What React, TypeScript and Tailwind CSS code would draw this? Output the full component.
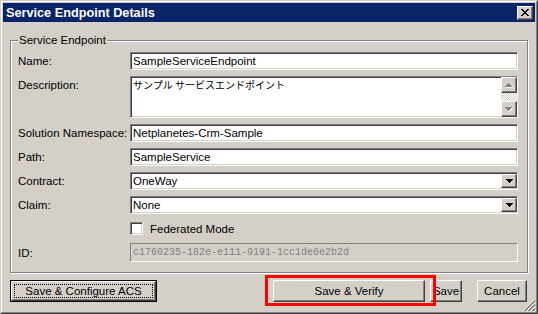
import React from "react";

const sunken =
  "border border-t-[#808080] border-l-[#808080] border-b-white border-r-white shadow-[inset_1px_1px_0_#404040,inset_-1px_-1px_0_#d4d0c8]";
const raised =
  "border border-t-white border-l-white border-b-[#404040] border-r-[#404040] shadow-[inset_-1px_-1px_0_#808080]";

function DownArrow({ color = "#000" }: { color?: string }) {
  return (
    <svg width="7" height="4" viewBox="0 0 7 4" className="block">
      <path d="M0 0h7v1H0zM1 1h5v1H1zM2 2h3v1H2zM3 3h1v1H3z" fill={color} />
    </svg>
  );
}

function UpArrowDisabled() {
  return (
    <svg width="8" height="5" viewBox="0 0 8 5" className="block">
      <path d="M4 1h1v1H4zM3 2h3v1H3zM2 3h5v1H2zM1 4h7v1H1z" fill="#fff" />
      <path d="M3 0h1v1H3zM2 1h3v1H2zM1 2h5v1H1zM0 3h7v1H0z" fill="#808080" />
    </svg>
  );
}

function DownArrowDisabled() {
  return (
    <svg width="8" height="5" viewBox="0 0 8 5" className="block">
      <path d="M1 1h7v1H1zM2 2h5v1H2zM3 3h3v1H3zM4 4h1v1H4z" fill="#fff" />
      <path d="M0 0h7v1H0zM1 1h5v1H1zM2 2h3v1H2zM3 3h1v1H3z" fill="#808080" />
    </svg>
  );
}

function ResizeGrip() {
  const px: React.ReactNode[] = [];
  const white = [11, 15, 19];
  const gray = [12, 13, 16, 17, 20, 21];
  for (let y = 0; y < 12; y++) {
    for (let x = 0; x < 12; x++) {
      const k = x + y;
      if (white.includes(k)) px.push(<rect key={`${x}-${y}`} x={x} y={y} width="1" height="1" fill="#fff" />);
      else if (gray.includes(k)) px.push(<rect key={`${x}-${y}`} x={x} y={y} width="1" height="1" fill="#808080" />);
    }
  }
  return (
    <svg width="12" height="12" viewBox="0 0 12 12" shapeRendering="crispEdges" className="absolute bottom-[3px] right-[3px]">
      {px}
    </svg>
  );
}

function TextRow({ label, value }: { label: string; value: string }) {
  return (
    <div className="flex h-[18px] items-center">
      <div className="w-[112px] shrink-0">{label}</div>
      <div className={`${sunken} flex h-full flex-1 items-center bg-white pl-[2px]`}>
        {value}
      </div>
    </div>
  );
}

function ComboRow({ label, value }: { label: string; value: string }) {
  return (
    <div className="flex h-[18px] items-center">
      <div className="w-[112px] shrink-0">{label}</div>
      <div className={`${sunken} flex h-full flex-1 items-center bg-white pl-[2px]`}>
        <span className="flex-1">{value}</span>
        <div
          className={`${raised} flex h-[14px] w-[16px] items-center justify-center bg-[#d4d0c8]`}
        >
          <DownArrow />
        </div>
      </div>
    </div>
  );
}

export default function App() {
  return (
    <div className="relative h-[314px] w-[538px] select-none font-['Liberation_Sans',Arial,sans-serif] text-[11.5px] leading-[14px] text-black">
      <div className="h-full w-full border border-t-[#d4d0c8] border-l-[#d4d0c8] border-b-[#404040] border-r-[#404040] bg-[#d4d0c8]">
        <div className="flex h-full w-full flex-col border border-t-white border-l-white border-b-[#808080] border-r-[#808080] p-[1px]">
          {/* Title bar */}
          <div className="flex h-[19px] shrink-0 items-center justify-between bg-[#0a246a] pl-[3px] pr-[2px]">
            <span className="text-[12.7px] font-bold text-white">Service Endpoint Details</span>
            <div
              className={`${raised} flex h-[14px] w-[16px] items-center justify-center bg-[#d4d0c8]`}
            >
              <svg width="8" height="7" viewBox="0 0 8 7" className="block">
                <path
                  d="M0 0h2v1H0zM6 0h2v1H6zM1 1h2v1H1zM5 1h2v1H5zM2 2h4v1H2zM3 3h2v1H3zM2 4h4v1H2zM1 5h2v1H1zM5 5h2v1H5zM0 6h2v1H0zM6 6h2v1H6z"
                  fill="#000"
                />
              </svg>
            </div>
          </div>

          {/* Group box */}
          <div className="relative mx-[7px] mt-[18px] border border-[#808080] pb-[10px] pl-[7px] pr-[9px] pt-[11px] shadow-[inset_1px_1px_0_#fff,1px_1px_0_#fff]">
            <span className="absolute left-[7px] top-[-8px] bg-[#d4d0c8] px-[1px]">
              Service Endpoint
            </span>
            <div className="flex flex-col gap-[6px]">
              <TextRow label="Name:" value="SampleServiceEndpoint" />
              {/* Description */}
              <div className="flex h-[42px]">
                <div className="w-[112px] shrink-0 pt-[2px]">Description:</div>
                <div className={`${sunken} flex h-full flex-1 bg-white`}>
                  <div className="flex-1 pl-[2px] pt-[2px] font-['Noto_Sans_CJK_JP',sans-serif] text-[10px] leading-[12px]">
                    サンプル サービスエンドポイント
                  </div>
                  <div className="flex w-[16px] flex-col bg-[conic-gradient(#fff_25%,#d4d0c8_0_50%,#fff_0_75%,#d4d0c8_0)] bg-[length:2px_2px]">
                    <div
                      className={`${raised} flex h-[16px] w-[16px] items-center justify-center bg-[#d4d0c8]`}
                    >
                      <UpArrowDisabled />
                    </div>
                    <div className="flex-1" />
                    <div
                      className={`${raised} flex h-[16px] w-[16px] items-center justify-center bg-[#d4d0c8]`}
                    >
                      <DownArrowDisabled />
                    </div>
                  </div>
                </div>
              </div>
              <TextRow label="Solution Namespace:" value="Netplanetes-Crm-Sample" />
              <TextRow label="Path:" value="SampleService" />
              <ComboRow label="Contract:" value="OneWay" />
              <ComboRow label="Claim:" value="None" />
              {/* Checkbox */}
              <div className="flex h-[17px] items-center">
                <div className="w-[112px] shrink-0" />
                <div className={`${sunken} h-[13px] w-[13px] bg-white`} />
                <span className="ml-[7px]">Federated Mode</span>
              </div>
              {/* ID */}
              <div className="flex h-[19px] items-center">
                <div className="w-[112px] shrink-0">ID:</div>
                <div className="flex h-full flex-1 items-center border border-t-[#808080] border-l-[#808080] border-b-white border-r-white bg-[#d4d0c8] pl-[2px] font-['Liberation_Mono',monospace] text-[10px] text-[#808080]">
                  c1760235-182e-e111-9191-1cc1de6e2b2d
                </div>
              </div>
            </div>
          </div>

          {/* Buttons */}
          <div className="ml-[7px] mr-[8px] mt-[7px] flex h-[22px] items-stretch">
            <button className="h-full w-[147px] border border-black p-0">
              <div className={`${raised} flex h-full w-full p-[2px]`}>
                <div className="flex flex-1 items-center justify-center border border-dotted border-black">
                  Save &amp; Configure ACS
                </div>
              </div>
            </button>
            <div className="flex-1" />
            <button className={`${raised} flex h-full w-[152px] items-center justify-center`}>
              Save &amp; Verify
            </button>
            <button
              className={`${raised} ml-[5px] flex h-full w-[32px] items-center justify-center`}
            >
              Save
            </button>
            <button
              className={`${raised} ml-[15px] flex h-full w-[50px] items-center justify-center`}
            >
              Cancel
            </button>
          </div>
        </div>
      </div>

      {/* Red highlight annotation */}
      <div className="pointer-events-none absolute left-[265px] top-[275px] h-[31px] w-[171px] border-[3px] border-[#ff0000]" />

      <ResizeGrip />
    </div>
  );
}
